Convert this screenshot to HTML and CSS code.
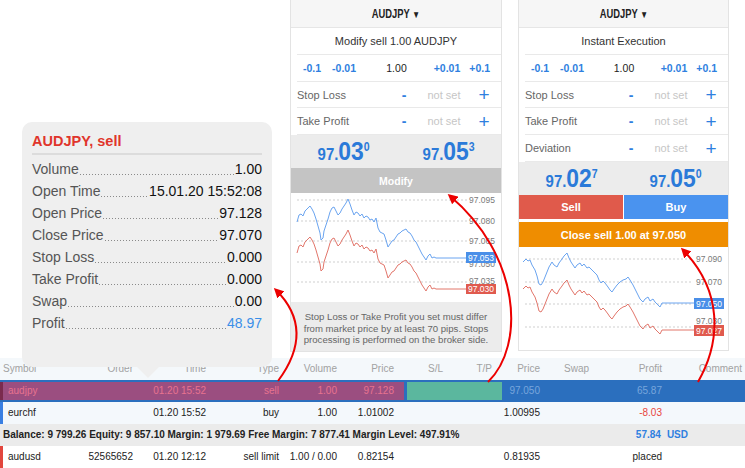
FILE: index.html
```html
<!DOCTYPE html>
<html lang="en">
<head>
  <meta charset="UTF-8" />
  <title>Trade - AUDJPY</title>
  <link rel="stylesheet" href="styles.css">
</head>
<body>
  <div class="page">
    <div class="top">
      <section class="ticket">
        <div class="ticket-head"><span>AUDJPY <i>▼</i></span></div>
        <div class="ticket-title">Modify sell 1.00 AUDJPY</div>
        <div class="lots">
          <div class="lot-dn"><span>-0.1</span><span>-0.01</span></div>
          <div class="lot-val">1.00</div>
          <div class="lot-up"><span>+0.01</span><span>+0.1</span></div>
        </div>
        <div class="field"><span class="lbl">Stop Loss</span><span class="mn">-</span><span class="ns">not set</span><span class="pl">+</span></div>
        <div class="field"><span class="lbl">Take Profit</span><span class="mn">-</span><span class="ns">not set</span><span class="pl">+</span></div>
        <div class="quotes">
          <div class="quote"><span class="q"><small>97.</small><b>03</b><sup>0</sup></span></div>
          <div class="quote"><span class="q"><small>97.</small><b>05</b><sup>3</sup></span></div>
        </div>
        <div class="btn-modify">Modify</div>
        <svg class="chart" width="210" height="109" viewBox="291 193 210 109">
          <g stroke="#cfcfcf" stroke-dasharray="2 2">
            <line x1="297" x2="468" y1="200" y2="200"/>
            <line x1="297" x2="468" y1="221" y2="221"/>
            <line x1="297" x2="468" y1="241" y2="241"/>
            <line x1="297" x2="468" y1="262" y2="262"/>
            <line x1="297" x2="468" y1="282" y2="282"/>
          </g>
          <g class="axis">
            <text x="469" y="203">97.095</text>
            <text x="469" y="224">97.080</text>
            <text x="469" y="244">97.065</text>
            <text x="469" y="267">97.050</text>
            <text x="469" y="284">97.035</text>
          </g>
          <polyline fill="none" stroke="#6aa4f0" points="297,222 299,215 301,214 303,216 305,211 308,208 310,206 312,209 314,213 316,219 318,226 320,233 321,240 323,238 324,231 326,225 328,219 330,212 332,208 334,207 336,211 338,215 340,213 342,209 344,206 346,203 348,199 350,204 352,210 354,215 356,212 358,213 360,216 362,214 364,218 366,216 368,217 370,220 372,219 374,222 376,218 378,228 380,232 382,233 384,234 386,240 388,247 390,244 392,241 394,240 396,237 398,234 400,233 402,231 404,230 406,229 408,232 410,233 412,236 414,240 416,242 418,246 420,250 422,254 424,257 426,260 428,256 430,254 432,258 434,257 436,258 466,258"/>
          <polyline fill="none" stroke="#e2766b" transform="translate(0 31)" points="297,222 299,215 301,214 303,216 305,211 308,208 310,206 312,209 314,213 316,219 318,226 320,233 321,240 323,238 324,231 326,225 328,219 330,212 332,208 334,207 336,211 338,215 340,213 342,209 344,206 346,203 348,199 350,204 352,210 354,215 356,212 358,213 360,216 362,214 364,218 366,216 368,217 370,220 372,219 374,222 376,218 378,228 380,232 382,233 384,234 386,240 388,247 390,244 392,241 394,240 396,237 398,234 400,233 402,231 404,230 406,229 408,232 410,233 412,236 414,240 416,242 418,246 420,250 422,254 424,257 426,260 428,256 430,254 432,258 434,257 436,258 466,258"/>
          <rect x="466" y="252" width="30" height="11" fill="#4a8fe8"/>
          <text class="tag" x="468" y="260.5">97.053</text>
          <rect x="466" y="284" width="30" height="10" fill="#e05a4e"/>
          <text class="tag" x="468" y="292">97.030</text>
        </svg>
        <div class="note">Stop Loss or Take Profit you set must differ<br>from market price by at least 70 pips. Stops<br>processing is performed on the broker side.</div>
      </section>

      <section class="ticket ticket-exec">
        <div class="ticket-head"><span>AUDJPY <i>▼</i></span></div>
        <div class="ticket-title">Instant Execution</div>
        <div class="lots">
          <div class="lot-dn"><span>-0.1</span><span>-0.01</span></div>
          <div class="lot-val">1.00</div>
          <div class="lot-up"><span>+0.01</span><span>+0.1</span></div>
        </div>
        <div class="field"><span class="lbl">Stop Loss</span><span class="mn">-</span><span class="ns">not set</span><span class="pl">+</span></div>
        <div class="field"><span class="lbl">Take Profit</span><span class="mn">-</span><span class="ns">not set</span><span class="pl">+</span></div>
        <div class="field"><span class="lbl">Deviation</span><span class="mn">-</span><span class="ns">not set</span><span class="pl">+</span></div>
        <div class="quotes">
          <div class="quote"><span class="q"><small>97.</small><b>02</b><sup>7</sup></span></div>
          <div class="quote"><span class="q"><small>97.</small><b>05</b><sup>0</sup></span></div>
        </div>
        <div class="sides">
          <div class="btn-sell">Sell</div>
          <div class="btn-buy">Buy</div>
        </div>
        <div class="btn-close">Close sell 1.00 at 97.050</div>
        <svg class="chart" width="209" height="103" viewBox="519 247 209 103">
          <g stroke="#cfcfcf" stroke-dasharray="2 2">
            <line x1="525" x2="692" y1="259" y2="259"/>
            <line x1="525" x2="692" y1="282" y2="282"/>
            <line x1="525" x2="692" y1="304" y2="304"/>
            <line x1="525" x2="692" y1="327" y2="327"/>
          </g>
          <g class="axis">
            <text x="696" y="262">97.090</text>
            <text x="696" y="285">97.070</text>
            <text x="696" y="307">97.050</text>
            <text x="696" y="324">97.030</text>
          </g>
          <polyline fill="none" stroke="#6aa4f0" points="523,262 526,259 528,261 530,260 532,265 535,270 537,276 539,284 541,285 543,282 545,277 547,272 549,267 552,262 554,265 557,267 559,263 562,259 564,256 566,254 567,253 569,258 571,262 573,265 575,268 577,265 580,263 582,266 584,264 587,268 589,267 592,270 594,272 597,275 599,280 601,283 603,281 605,283 608,287 610,290 612,292 614,289 617,285 620,282 623,280 626,279 628,277 630,280 633,285 635,289 638,295 640,299 643,302 645,299 648,297 650,301 653,299 655,302 658,305 660,307 662,303 695,303"/>
          <polyline fill="none" stroke="#e2766b" transform="translate(0 27)" points="523,262 526,259 528,261 530,260 532,265 535,270 537,276 539,284 541,285 543,282 545,277 547,272 549,267 552,262 554,265 557,267 559,263 562,259 564,256 566,254 567,253 569,258 571,262 573,265 575,268 577,265 580,263 582,266 584,264 587,268 589,267 592,270 594,272 597,275 599,280 601,283 603,281 605,283 608,287 610,290 612,292 614,289 617,285 620,282 623,280 626,279 628,277 630,280 633,285 635,289 638,295 640,299 643,302 645,299 648,297 650,301 653,299 655,302 658,305 660,307 662,303 695,303"/>
          <rect x="694" y="298" width="30" height="11" fill="#4a8fe8"/>
          <text class="tag" x="696" y="306.5">97.050</text>
          <rect x="694" y="325" width="30" height="11" fill="#e05a4e"/>
          <text class="tag" x="696" y="333.5">97.027</text>
        </svg>
      </section>
    </div>

    <div class="trades">
      <div class="trow thead">
        <span>Symbol</span><span>Order</span><span>Time</span><span>Type</span><span>Volume</span><span>Price</span>
        <span>S/L</span><span>T/P</span><span>Price</span><span>Swap</span><span>Profit</span><span>Comment</span>
      </div>
      <div class="trow sel">
        <span class="hl">audjpy</span><span class="hl"></span><span class="hl">01.20 15:52</span><span class="hl">sell</span><span class="hl">1.00</span><span class="hl">97.128</span>
        <span class="sl"></span><span class="tp"></span><span>97.050</span><span></span><span>65.87</span><span></span>
      </div>
      <div class="trow buy">
        <span>eurchf</span><span></span><span>01.20 15:52</span><span>buy</span><span>1.00</span><span>1.01002</span>
        <span></span><span></span><span>1.00995</span><span></span><span class="loss">-8.03</span><span></span>
      </div>
      <div class="balance">
        <span>Balance: 9 799.26 Equity: 9 857.10 Margin: 1 979.69 Free Margin: 7 877.41 Margin Level: 497.91%</span>
        <span class="total">57.84</span><span class="cur">USD</span>
      </div>
      <div class="trow pending">
        <span>audusd</span><span>52565652</span><span>01.20 12:12</span><span>sell limit</span><span>1.00 / 0.00</span><span>0.82154</span>
        <span></span><span></span><span>0.81935</span><span></span><span>placed</span><span></span>
      </div>
    </div>

    <div class="tooltip">
      <h3>AUDJPY, sell</h3>
      <div class="tip-row"><span class="lbl">Volume</span><span class="lead"></span><span>1.00</span></div>
      <div class="tip-row"><span class="lbl">Open Time</span><span class="lead"></span><span>15.01.20 15:52:08</span></div>
      <div class="tip-row"><span class="lbl">Open Price</span><span class="lead"></span><span>97.128</span></div>
      <div class="tip-row"><span class="lbl">Close Price</span><span class="lead"></span><span>97.070</span></div>
      <div class="tip-row"><span class="lbl">Stop Loss</span><span class="lead"></span><span>0.000</span></div>
      <div class="tip-row"><span class="lbl">Take Profit</span><span class="lead"></span><span>0.000</span></div>
      <div class="tip-row"><span class="lbl">Swap</span><span class="lead"></span><span>0.00</span></div>
      <div class="tip-row"><span class="lbl">Profit</span><span class="lead"></span><span class="gain">48.97</span></div>
    </div>

    <svg class="arrows" width="745" height="468" viewBox="0 0 745 468">
      <defs>
        <marker id="head" viewBox="0 0 10 10" refX="7" refY="5" markerWidth="5" markerHeight="5" orient="auto">
          <path d="M0,0 L10,5 L0,10 z" fill="#ec0000"/>
        </marker>
      </defs>
      <g fill="none" stroke="#ec0000" stroke-width="2" marker-end="url(#head)">
        <path d="M278,381 Q316,330 276,290"/>
        <path d="M488,382 C526,345 520,255 450,196"/>
        <path d="M698,382 C722,340 722,290 683,250"/>
      </g>
    </svg>
  </div>
</body>
</html>
```

FILE: styles.css
```css
* {
  box-sizing: border-box;
}

body {
  margin: 0;
  font-family: "Liberation Sans", Arial, sans-serif;
  background: #ffffff;
  color: #222;
}

.page {
  position: relative;
  width: 745px;
  height: 468px;
  overflow: hidden;
}

.top {
  display: flex;
  gap: 16px;
  height: 358px;
  padding-left: 290px;
}

/* order tickets */

.ticket {
  width: 212px;
  height: 352px;
  border: 1px solid #e3e3e3;
  border-top: none;
  display: flex;
  flex-direction: column;
}

.ticket-exec {
  width: 211px;
  height: 351px;
}

.ticket-head {
  height: 28px;
  flex-shrink: 0;
  background: #f6f6f6;
  border-bottom: 1px solid #e6e6e6;
  display: flex;
  align-items: center;
  justify-content: center;
  font-size: 12px;
  font-weight: bold;
}

.ticket-head span {
  display: inline-block;
  transform: scaleX(0.78);
}

.ticket-head i {
  font-style: normal;
  font-size: 10px;
}

.ticket-title {
  height: 27px;
  flex-shrink: 0;
  margin-left: 6px;
  padding-right: 6px;
  border-bottom: 1px solid #e9e9e9;
  display: flex;
  align-items: center;
  justify-content: center;
  font-size: 11px;
  color: #333;
}

.lots {
  height: 27px;
  flex-shrink: 0;
  margin-left: 6px;
  padding: 0 11px 0 6px;
  border-bottom: 1px solid #e9e9e9;
  display: grid;
  grid-template-columns: 1fr auto 1fr;
  align-items: center;
  font-size: 10.5px;
}

.lot-dn,
.lot-up {
  display: flex;
  gap: 11px;
  color: #2f7fe0;
  font-weight: bold;
}

.lot-up {
  justify-content: flex-end;
  gap: 9px;
}

.lot-val {
  color: #222;
}

.field {
  height: 26px;
  flex-shrink: 0;
  margin-left: 6px;
  padding-right: 9px;
  border-bottom: 1px solid #e9e9e9;
  display: grid;
  grid-template-columns: 1fr 16px 64px 16px;
  align-items: center;
  font-size: 11px;
}

.field + .field {
  height: 27px;
}

.field:last-of-type {
  border-bottom: none;
}

.field .lbl {
  color: #666;
}

.field .mn {
  text-align: center;
  color: #2f7fe0;
  font-size: 14px;
  font-weight: bold;
}

.field .ns {
  text-align: center;
  color: #c6c6c6;
}

.field .pl {
  text-align: center;
  color: #2f7fe0;
  font-size: 19px;
  line-height: 1;
}

.quotes {
  height: 33px;
  flex-shrink: 0;
  background: #ececec;
  display: grid;
  grid-template-columns: 1fr 1fr;
}

.quote {
  text-align: center;
  line-height: 33px;
  color: #2b7ad9;
  font-weight: bold;
}

.quote .q {
  display: inline-block;
  transform: scaleX(0.88);
}

.quote small {
  font-size: 17px;
}

.quote b {
  font-size: 26px;
}

.quote sup {
  font-size: 12px;
  vertical-align: 9px;
  line-height: 0;
}

.btn-modify {
  height: 25px;
  flex-shrink: 0;
  background: #c4c4c4;
  color: #fff;
  font-weight: bold;
  font-size: 10.5px;
  display: flex;
  align-items: center;
  justify-content: center;
}

.chart {
  display: block;
  flex-shrink: 0;
}

.chart .axis text {
  font-size: 8.5px;
  fill: #7a7a7a;
  font-family: "Liberation Sans", Arial, sans-serif;
}

.chart .tag {
  font-size: 8.5px;
  fill: #ffffff;
  font-family: "Liberation Sans", Arial, sans-serif;
}

.note {
  height: 49px;
  flex-shrink: 0;
  background: #ececec;
  padding-top: 9px;
  text-align: center;
  font-size: 9.6px;
  line-height: 11.5px;
  color: #666;
}

.sides {
  height: 24px;
  flex-shrink: 0;
  display: flex;
  gap: 1px;
  color: #fff;
  font-weight: bold;
  font-size: 11px;
}

.btn-sell,
.btn-buy {
  flex: 1;
  display: flex;
  align-items: center;
  justify-content: center;
}

.btn-sell {
  background: #e05a4b;
}

.btn-buy {
  background: #4a93ef;
}

.btn-close {
  height: 25px;
  flex-shrink: 0;
  margin-top: 3px;
  background: #ef8d00;
  color: #fff;
  font-weight: bold;
  font-size: 11px;
  display: flex;
  align-items: center;
  justify-content: center;
}

/* trade table */

.trades {
  font-size: 10px;
}

.trow {
  display: grid;
  grid-template-columns: 70px 73px 73px 73px 58px 57px 49px 49px 48px 49px 73px 73px;
  height: 22px;
  line-height: 22px;
}

.trow > span {
  text-align: right;
  padding-right: 10px;
  white-space: nowrap;
}

.trow > span:first-child {
  text-align: left;
  padding-left: 5px;
  border-left: 3px solid transparent;
}

.trow > span:last-child {
  padding-right: 3px;
}

.thead {
  background: #f4f8fb;
  color: #a2a2a2;
}

.thead > span:first-child {
  padding-left: 3px;
  border-left: none;
}

.sel {
  padding: 2px 0;
  background: #2b6fbe;
  color: #78a6dc;
}

.sel > span {
  line-height: 18px;
}

.sel .hl {
  background: #9b4e80;
  color: #e8738f;
}

.sel > span:first-child {
  border-left-color: #7a2b4e;
}

.sel .sl,
.sel .tp {
  background: #5bb79e;
}

.sel .sl {
  margin-left: 3px;
}

.buy {
  background: #f4f8fc;
}

.buy > span:first-child {
  border-left-color: #3a7fe2;
}

.loss {
  color: #e8453c;
}

.balance {
  display: flex;
  height: 22px;
  line-height: 22px;
  padding-left: 3px;
  background: #ebebeb;
  font-weight: bold;
}

.balance .total {
  margin-left: auto;
  color: #2f80e0;
}

.balance .cur {
  margin-left: 6px;
  margin-right: 57px;
  color: #2f80e0;
}

.pending > span:first-child {
  border-left-color: #e2463d;
}

/* position tooltip */

.tooltip {
  position: absolute;
  left: 22px;
  top: 122px;
  width: 250px;
  height: 245px;
  padding: 10px 10px 0;
  background: #efefef;
  border-radius: 10px;
}

.tooltip::after {
  content: "";
  position: absolute;
  left: 115px;
  bottom: -11px;
  border: 11px solid transparent;
  border-top-color: #efefef;
  border-bottom: 0;
}

.tooltip h3 {
  margin: 0 0 3px;
  padding-bottom: 3px;
  border-bottom: 2px solid #dcdcdc;
  font-size: 14.5px;
  line-height: 18px;
  color: #e0352b;
}

.tip-row {
  display: flex;
  height: 22px;
  line-height: 22px;
  font-size: 14px;
  color: #111;
}

.tip-row .lbl {
  color: #555;
}

.tip-row .lead {
  flex: 1;
  margin: 0 1px;
  background-image: linear-gradient(to right, #8a8a8a 1px, transparent 1px);
  background-size: 3px 1px;
  background-repeat: repeat-x;
  background-position: 0 16px;
}

.tip-row .gain {
  color: #3a8ee8;
}

.arrows {
  position: absolute;
  left: 0;
  top: 0;
  pointer-events: none;
}
```
